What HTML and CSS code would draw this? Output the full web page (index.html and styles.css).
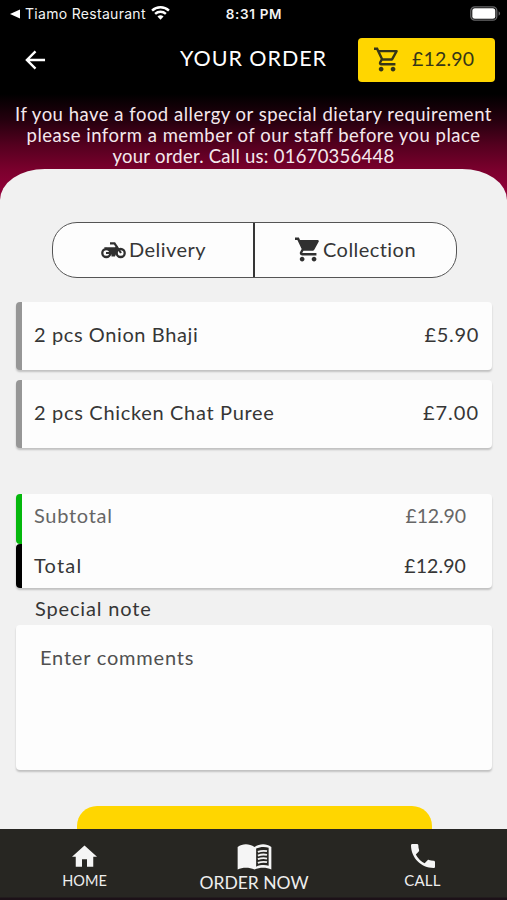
FILE: index.html
```html
<!DOCTYPE html>
<html lang="en">
<head>
<meta charset="utf-8">
<title>Your Order</title>
<link rel="stylesheet" href="styles.css">
</head>
<body>
<div class="screen">
  <div class="status">
    <div class="status-left">
      <svg class="back-tri" viewBox="0 0 10 10"><path d="M0 5 10 .5v9z"/></svg>
      <span class="app-name">Tiamo Restaurant</span>
      <svg class="wifi" viewBox="0 0 18 14"><path d="M1 5.2a11.5 11.5 0 0 1 16 0M3.900 8.300a7.400 7.400 0 0 1 10.200 0" fill="none" stroke="#fff" stroke-width="2.300"/><path d="M9 13.800 6.100 10.900a4.200 4.200 0 0 1 5.800 0z"/></svg>
    </div>
    <span class="clock">8:31 PM</span>
    <svg class="battery" viewBox="0 0 31 16"><rect x=".8" y=".8" width="26" height="13.400" rx="4" fill="none" stroke="#68686a" stroke-width="1.300"/><rect x="2.300" y="2.300" width="23" height="10.400" rx="2.500"/><path d="M28.600 5.200c2 1 2 3.600 0 4.600z" fill="#68686a"/></svg>
  </div>
  <header class="bar">
    <svg class="arrow" viewBox="0 0 22 20"><path d="M21 10H2M11 1 2 10l9 9" fill="none" stroke="#fff" stroke-width="2.500"/></svg>
    <h1 class="title">YOUR ORDER</h1>
    <button class="basket">
      <svg class="basket-icon" viewBox="1 2 21 20"><path d="M15.550 13c.75 0 1.410-.41 1.750-1.030l3.580-6.490A.996.996 0 0 0 20.010 4H5.210l-.94-2H1v2h2l3.600 7.590-1.350 2.440C4.520 15.370 5.480 17 7 17h12v-2H7l1.100-2h7.450zM6.160 6h12.150l-2.760 5H8.530L6.160 6zM7 18c-1.100 0-1.990.9-1.990 2S5.900 22 7 22s2-.9 2-2-.9-2-2-2zm10 0c-1.100 0-1.990.9-1.990 2s.89 2 1.990 2 2-.9 2-2-.9-2-2-2z"/></svg>
      <span class="basket-sum">£12.90</span>
    </button>
  </header>
  <div class="notice">
    <span class="n1">If you have a food allergy or special dietary requirement</span>
    <span class="n2">please inform a member of our staff before you place</span>
    <span class="n3">your order. Call us: 01670356448</span>
  </div>
  <main class="sheet">
    <div class="modes">
      <button class="mode delivery">
        <svg class="bike" viewBox="0 0 25 17"><g fill="none" stroke="#303030"><circle cx="5.300" cy="11" r="4" stroke-width="2.300"/><circle cx="19.700" cy="11" r="4" stroke-width="2.300"/><path d="M5 11h4.500M9 1.300h4.500L20 11" stroke-width="2.200"/></g><path d="M3 5.200h11l2.500-1.500v5L14 14.500h-3.500c0-4-2-7-5.500-7z" fill="#303030"/></svg>
        <span>Delivery</span>
      </button>
      <button class="mode collection">
        <svg class="cart" viewBox="1 2 21 20"><path d="M7 18c-1.100 0-1.990.9-1.990 2S5.900 22 7 22s2-.9 2-2-.9-2-2-2zM1 2v2h2l3.600 7.590-1.350 2.450C4.520 15.370 5.480 17 7 17h12v-2H7.420a.25.25 0 0 1-.25-.25L8.100 13h7.450c.75 0 1.410-.41 1.750-1.030l3.580-6.490A1 1 0 0 0 20 4H5.210l-.94-2H1zm16 16c-1.100 0-1.990.9-1.990 2s.89 2 1.990 2 2-.9 2-2-.9-2-2-2z"/></svg>
        <span>Collection</span>
      </button>
    </div>
    <div class="card item"><span class="i1">2 pcs Onion Bhaji</span><span class="price">£5.90</span></div>
    <div class="card item"><span class="i2">2 pcs Chicken Chat Puree</span><span class="price p7">£7.00</span></div>
    <div class="card totals">
      <div class="row sub"><span class="l-sub">Subtotal</span><span class="sum">£12.90</span></div>
      <div class="row total"><span class="l-tot">Total</span><span class="sum">£12.90</span></div>
    </div>
    <div class="note-label">Special note</div>
    <div class="card comments"><span class="enter">Enter comments</span></div>
    <div class="submit"></div>
  </main>
  <nav class="tabs">
    <div class="tab home">
      <svg class="home-icon" viewBox="2 3 20 17"><path d="M10 20v-6h4v6h5v-8h3L12 3 2 12h3v8z"/></svg>
      <span>HOME</span>
    </div>
    <div class="tab order">
      <svg class="book" viewBox="0 0 35 27"><path d="M0 3C5-.6 12-.6 17.500 3 23-.6 30-.6 35 3v23.500c-5-2.500-12-2.500-17.500 0-5.500-2.500-12.500-2.500-17.500 0z"/><path d="M19.200 4.800c4-2 9-2.300 13-.8v18.500c-4-1-9-.8-13 1z" fill="#272622"/><path d="M21 8.200c3-1.100 6.500-1.400 9.500-.7M21 12c3-1.100 6.500-1.400 9.500-.7M21 15.800c3-1.100 6.500-1.400 9.500-.7M21 19.600c3-1.100 6.500-1.400 9.500-.7" fill="none" stroke="#f2f2f2" stroke-width="1.900"/></svg>
      <span>ORDER NOW</span>
    </div>
    <div class="tab call">
      <svg class="phone" viewBox="3 3 18 18"><path d="M6.620 10.790a15.150 15.150 0 0 0 6.590 6.590l2.200-2.200c.27-.27.67-.36 1.020-.24 1.120.37 2.330.57 3.570.57.55 0 1 .45 1 1V20c0 .55-.45 1-1 1C10.610 21 3 13.390 3 4c0-.55.45-1 1-1h3.500c.55 0 1 .45 1 1 0 1.250.2 2.450.57 3.570.11.35.03.74-.25 1.020z"/></svg>
      <span>CALL</span>
    </div>
  </nav>
</div>
</body>
</html>
```
FILE: styles.css
```css
* { box-sizing: border-box; }
body { margin: 0; font-family: Lato, "Liberation Sans", sans-serif; color: #363636; }
button { font: inherit; color: inherit; border: 0; margin: 0; padding: 0; background: none; }
svg { display: block; flex: none; fill: #fff; }
span { white-space: nowrap; }

.screen {
  width: 507px; height: 900px; overflow: hidden;
  display: flex; flex-direction: column;
  background: linear-gradient(#000 0, #000 94px, #25000e 120px, #54001f 145px, #7b002d 170px, #96003b 198px);
}

.status {
  height: 28px; flex: none; padding: 0 6px 0 10px;
  display: grid; grid-template-columns: 1fr auto 1fr; align-items: center;
  color: #f4f4f4; font-family: Inter, "Liberation Sans", sans-serif; font-size: 14px;
}
.status-left { display: flex; align-items: center; margin-top: -1px; }
.back-tri { width: 10px; height: 10px; }
.app-name { margin-left: 5px; letter-spacing: .3px; }
.wifi { width: 19px; height: 15px; margin: -2px 0 0 5px; }
.clock { font-weight: 600; font-size: 13.500px; letter-spacing: .65px; margin-right: 3px; }
.battery { width: 31px; height: 16px; justify-self: end; margin-top: -1px; }

.bar { height: 66px; flex: none; display: flex; align-items: center; padding: 0 12px 0 25px; }
.arrow { width: 21px; height: 20px; margin-top: -2px; }
.title { flex: 1; margin: 0 0 6px; padding-left: 134px; color: #fff; font-size: 21.500px; font-weight: 400; line-height: 26px; letter-spacing: .95px; white-space: nowrap; }
.basket { width: 137px; height: 44px; margin-top: -2px; border-radius: 4px; background: #ffd600; display: flex; align-items: center; padding-left: 16px; color: #363618; }
.basket-icon { width: 25px; height: 25px; margin-top: -1px; fill: #363618; }
.basket-sum { margin: -3px 0 0 13px; font-size: 19.500px; letter-spacing: .2px; }

.notice { height: 75px; flex: none; padding-top: 10px; display: flex; flex-direction: column; align-items: center; color: #f4e8ed; font-size: 18.500px; line-height: 21px; }
.n1 { letter-spacing: .5px; }
.n2 { letter-spacing: .5px; }
.n3 { letter-spacing: .25px; }

.sheet { flex: 1; min-height: 0; overflow: hidden; padding: 53px 15px 0 16px; background: #f1f1f1; border-radius: 45px 45px 0 0 / 31px 31px 0 0; }
.modes { width: 405px; height: 56px; margin: 0 0 24px 36px; display: flex; border: 1px solid #555; border-radius: 25px; background: #fdfdfd; overflow: hidden; }
.mode { flex: 1; display: flex; align-items: center; font-size: 20px; letter-spacing: .45px; }
.mode span { margin-top: -2px; }
.delivery { padding-left: 48px; }
.collection { flex: 0 0 203px; padding-left: 40px; border-left: 2px solid #363636; }
.bike { width: 25px; height: 17px; margin-right: 3px; }
.cart { width: 25px; height: 25px; fill: #303030; margin: -2px 3px 0 0; }

.card { background: #fdfdfd; border-radius: 4px; box-shadow: 0 2px 2px rgba(0, 0, 0, .2); }
.item { height: 68px; margin-bottom: 10px; display: flex; align-items: center; justify-content: space-between; padding: 0 13px 4px 12px; border-left: 6px solid #969696; font-size: 20px; letter-spacing: .6px; }
.i2 { letter-spacing: .68px; }
.price { letter-spacing: .7px; }
.p7 { letter-spacing: 1px; }
.totals { height: 94px; margin-top: 46px; }
.row { display: flex; justify-content: space-between; padding: 0 26px 0 12px; border-radius: 4px; font-size: 20px; line-height: 43px; letter-spacing: .7px; }
.sum { font-size: 19.500px; line-height: 44px; letter-spacing: -.1px; }
.sub { height: 50px; border-left: 6px solid #05b80d; color: #666; }
.total { height: 44px; border-left: 6px solid #000; }
.l-tot { letter-spacing: 1.200px; }
.total .sum { letter-spacing: .1px; }
.note-label { height: 37px; padding: 6px 0 0 19px; font-size: 20px; line-height: 28px; letter-spacing: .85px; }
.comments { height: 145px; padding: 18px 24px; font-size: 20px; line-height: 28px; letter-spacing: .8px; color: #505050; }
.submit { width: 355px; height: 50px; margin: 36px 0 0 61px; border-radius: 20px; background: #ffd600; }

.tabs { height: 71px; flex: none; display: grid; grid-template-columns: 169px 170px 168px; background: linear-gradient(#272622 68px, #1c1118 69px); color: #eee; }
.tab { display: flex; flex-direction: column; align-items: center; }
.tab svg { fill: #f5f5f5; }
.tab span { font-size: 15px; line-height: 18px; }
.home-icon { width: 25px; height: 22px; margin: 16px 0 5px; }
.tab.home span { font-size: 14.500px; }
.book { width: 35px; height: 26px; margin: 15px 0 2px; }
.tab.order span { font-size: 17.500px; line-height: 22px; }
.phone { width: 24px; height: 24px; margin: 15px 0 3px; }
.tab.call { padding-right: 1px; }
.tab.call span { letter-spacing: .2px; }
```
